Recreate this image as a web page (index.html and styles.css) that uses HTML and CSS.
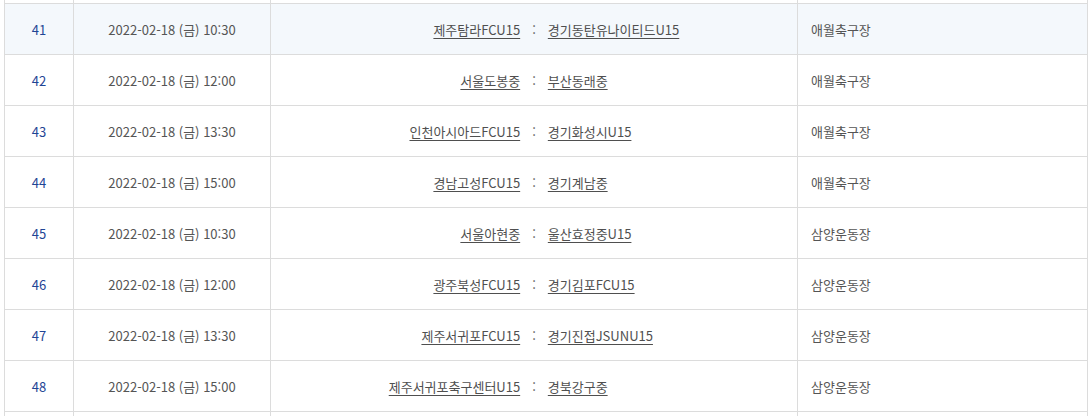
FILE: index.html
```html
<!DOCTYPE html>
<html lang="ko">
<head>
<meta charset="utf-8">
<title>경기 일정</title>
<link rel="stylesheet" href="styles.css">
</head>
<body>
<div class="viewport">
  <div class="schedule">
    <div class="row stub"><div class="cell"></div><div class="cell"></div><div class="cell"></div><div class="cell"></div></div>
    <div class="row hover"><div class="cell num">41</div><div class="cell date">2022-02-18 (금) 10:30</div><div class="cell match"><a class="home" href="#">제주탐라FCU15</a><span class="sep">:</span><a class="away" href="#">경기동탄유나이티드U15</a></div><div class="cell venue">애월축구장</div></div>
    <div class="row"><div class="cell num">42</div><div class="cell date">2022-02-18 (금) 12:00</div><div class="cell match"><a class="home" href="#">서울도봉중</a><span class="sep">:</span><a class="away" href="#">부산동래중</a></div><div class="cell venue">애월축구장</div></div>
    <div class="row"><div class="cell num">43</div><div class="cell date">2022-02-18 (금) 13:30</div><div class="cell match"><a class="home" href="#">인천아시아드FCU15</a><span class="sep">:</span><a class="away" href="#">경기화성시U15</a></div><div class="cell venue">애월축구장</div></div>
    <div class="row"><div class="cell num">44</div><div class="cell date">2022-02-18 (금) 15:00</div><div class="cell match"><a class="home" href="#">경남고성FCU15</a><span class="sep">:</span><a class="away" href="#">경기계남중</a></div><div class="cell venue">애월축구장</div></div>
    <div class="row"><div class="cell num">45</div><div class="cell date">2022-02-18 (금) 10:30</div><div class="cell match"><a class="home" href="#">서울아현중</a><span class="sep">:</span><a class="away" href="#">울산효정중U15</a></div><div class="cell venue">삼양운동장</div></div>
    <div class="row"><div class="cell num">46</div><div class="cell date">2022-02-18 (금) 12:00</div><div class="cell match"><a class="home" href="#">광주북성FCU15</a><span class="sep">:</span><a class="away" href="#">경기김포FCU15</a></div><div class="cell venue">삼양운동장</div></div>
    <div class="row"><div class="cell num">47</div><div class="cell date">2022-02-18 (금) 13:30</div><div class="cell match"><a class="home" href="#">제주서귀포FCU15</a><span class="sep">:</span><a class="away" href="#">경기진접JSUNU15</a></div><div class="cell venue">삼양운동장</div></div>
    <div class="row"><div class="cell num">48</div><div class="cell date">2022-02-18 (금) 15:00</div><div class="cell match"><a class="home" href="#">제주서귀포축구센터U15</a><span class="sep">:</span><a class="away" href="#">경북강구중</a></div><div class="cell venue">삼양운동장</div></div>
    <div class="row stub"><div class="cell"></div><div class="cell"></div><div class="cell"></div><div class="cell"></div></div>
  </div>
</div>
</body>
</html>
```
FILE: styles.css
```css
html, body {
  margin: 0;
  padding: 0;
  background: #fff;
}
.viewport {
  width: 1091px;
  height: 416px;
  overflow: hidden;
}
.schedule {
  margin: -48px 0 0 4px;
  width: 1084px;
  font-family: "Noto Sans CJK KR", "Noto Sans", sans-serif;
  font-size: 13px;
  color: #555;
}
.row {
  display: grid;
  grid-template-columns: 69px 197px 527px 290px;
  height: 51px;
  box-sizing: border-box;
  border-top: 1px solid #dcdcdc;
  border-right: 1px solid #dcdcdc;
  background: #fff;
}
.row.hover {
  background: #f4f8fc;
}
.cell {
  border-left: 1px solid #dcdcdc;
  display: flex;
  align-items: center;
  white-space: nowrap;
}
.num {
  justify-content: center;
  color: #1f4595;
}
.date {
  justify-content: center;
  color: #555;
}
.match {
  display: grid;
  grid-template-columns: 1fr auto 1fr;
  align-items: center;
}
.match a {
  color: #4f4f4f;
  text-decoration: underline;
  text-underline-offset: 3px;
}
.home {
  justify-self: end;
}
.away {
  justify-self: start;
}
.sep {
  margin: 0 12px;
  color: #555;
}
.venue {
  padding-left: 13px;
  color: #555;
}
```
